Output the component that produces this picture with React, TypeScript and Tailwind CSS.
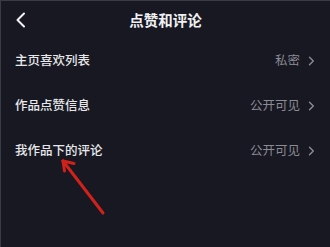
import React from "react";

function Chevron() {
  return (
    <svg width="7" height="10" viewBox="0 0 7 10" className="ml-[8px]">
      <path d="M1.5 1.2 L5.3 5 L1.5 8.8" fill="none" stroke="#8b8b93" strokeWidth="1.4" strokeLinecap="round" strokeLinejoin="round" />
    </svg>
  );
}

function Row({ label, value }: { label: string; value: string }) {
  return (
    <div className="flex h-[45px] items-center justify-between pl-[14px] pr-[15px]">
      <span className="text-[12.5px] font-medium text-[#e8e8ea]">{label}</span>
      <div className="flex items-center">
        <span className="text-[12.5px] text-[#8b8b93]">{value}</span>
        <Chevron />
      </div>
    </div>
  );
}

export default function App() {
  return (
    <div
      className="relative h-[247px] w-[330px] overflow-hidden border-l border-t border-[#3a3b45] bg-[#171822]"
      style={{ fontFamily: '"Noto Sans CJK SC", "Noto Sans", sans-serif' }}
    >
      <div className="relative flex h-[37px] items-center justify-center">
        <svg width="12" height="16" viewBox="0 0 12 16" className="absolute left-[14px] top-[11px]">
          <path d="M9 1.5 L2.5 8 L9 14.5" fill="none" stroke="#f2f2f4" strokeWidth="2" strokeLinecap="round" strokeLinejoin="round" />
        </svg>
        <span className="text-[14.5px] font-semibold text-[#f0f0f2]">点赞和评论</span>
      </div>
      <Row label="主页喜欢列表" value="私密" />
      <Row label="作品点赞信息" value="公开可见" />
      <Row label="我作品下的评论" value="公开可见" />
      <svg className="pointer-events-none absolute left-0 top-0" width="330" height="247" viewBox="0 0 330 247">
        <g stroke="#d0211b" strokeWidth="3" strokeLinecap="round" fill="none" strokeLinejoin="round">
          <path d="M102 212 L62 160" />
          <path d="M62 160 L73 162.5" />
          <path d="M62 160 L63.5 170" />
        </g>
      </svg>
    </div>
  );
}
